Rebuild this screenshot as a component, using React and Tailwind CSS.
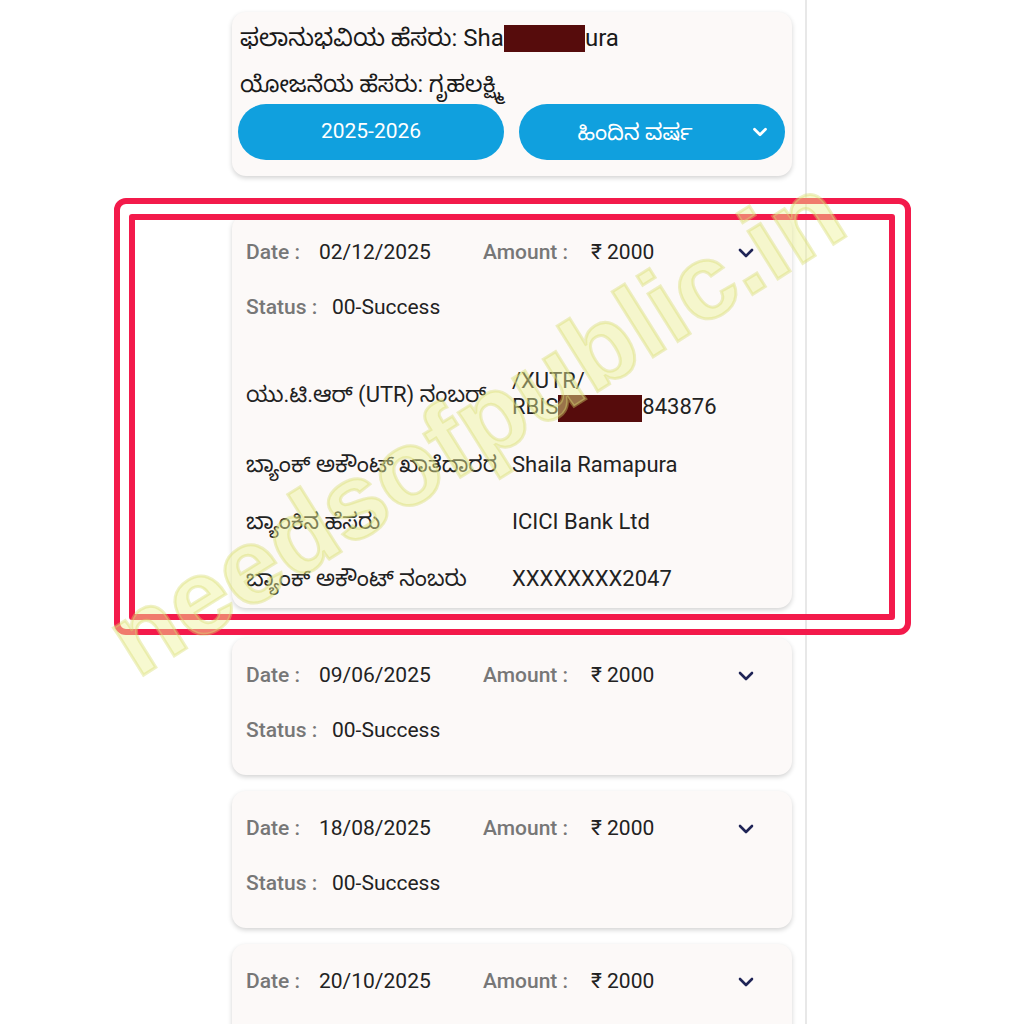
import { ChevronDown } from 'lucide-react'

const font = "font-['Roboto','Noto_Sans_Kannada','Noto_Sans',sans-serif]"

function Chevron({ className }) {
  return (
    <svg width="16" height="10" viewBox="0 0 16 10" className={className}>
      <polyline points="2,2 8,8 14,2" fill="none" stroke="currentColor" strokeWidth="2.6" strokeLinecap="round" strokeLinejoin="round" />
    </svg>
  )
}

function Redacted({ w }) {
  return <span className="inline-block h-[27px] bg-[#560c0c] align-middle" style={{ width: w }} />
}

function SummaryRows({ date }) {
  return (
    <>
      <div className="flex h-[28px] items-center text-[21px]">
        <span className="w-[73px] font-medium text-[#777]">Date :</span>
        <span className="w-[164px] text-[#222]">{date}</span>
        <span className="w-[108px] font-medium text-[#777]">Amount :</span>
        <span className="flex-1 text-[#222]">₹ 2000</span>
        <Chevron className="mr-[24px] text-[#1f2456]" />
      </div>
      <div className="mt-[27px] flex h-[28px] items-center text-[21px]">
        <span className="w-[86px] font-medium text-[#777]">Status :</span>
        <span className="text-[#222]">00-Success</span>
      </div>
    </>
  )
}

function DetailRow({ label, children, className }) {
  return (
    <div className={`grid grid-cols-[266px_1fr] items-center text-[22px] text-[#222] ${className}`}>
      <span className="whitespace-nowrap">{label}</span>
      <span>{children}</span>
    </div>
  )
}

export default function App() {
  const collapsed = ['09/06/2025', '18/08/2025', '20/10/2025']

  return (
    <div className={`relative h-[1024px] w-[1024px] overflow-hidden bg-white ${font}`}>
      <div className="ml-[220px] flex h-full w-[587px] flex-col border-r-2 border-[#e8e8e8] px-[12px] pt-[12px]">
        {/* beneficiary card */}
        <div className="flex h-[164px] w-[560px] shrink-0 flex-col rounded-[14px] bg-[#fcf9f8] px-[6px] pt-[12px] shadow-[0_2px_5px_rgba(0,0,0,0.18)]">
          <div className="flex h-[28px] items-center whitespace-nowrap px-[2px] text-[24px] text-[#1a1a1a]">
            ಫಲಾನುಭವಿಯ ಹೆಸರು: Sha<Redacted w={81} />ura
          </div>
          <div className="mt-[19px] flex h-[28px] items-center px-[2px] text-[23px] text-[#1a1a1a]">
            ಯೋಜನೆಯ ಹೆಸರು: ಗೃಹಲಕ್ಷ್ಮಿ
          </div>
          <div className="mt-[5px] flex gap-[15px]">
            <button className="flex h-[56px] w-[266px] items-center justify-center rounded-full bg-[#10a0de] text-[21px] text-white">
              2025-2026
            </button>
            <button className="relative flex h-[56px] w-[266px] items-center justify-center rounded-full bg-[#10a0de] pr-[34px] text-[22px] text-white">
              ಹಿಂದಿನ ವರ್ಷ
              <ChevronDown className="absolute right-[14px] h-[22px] w-[22px]" strokeWidth={3} />
            </button>
          </div>
        </div>

        {/* expanded payment card */}
        <div className="mt-[39px] w-[560px] shrink-0 rounded-[14px] bg-[#fcf9f8] px-[14px] pb-[18px] pt-[24px] shadow-[0_2px_5px_rgba(0,0,0,0.18)]">
          <SummaryRows date="02/12/2025" />
          <DetailRow label="ಯು.ಟಿ.ಆರ್ (UTR) ನಂಬರ್" className="mt-[46px]">
            <span className="block leading-[26px]">/XUTR/</span>
            <span className="block leading-[26px]">
              RBIS<Redacted w={84} />843876
            </span>
          </DetailRow>
          <DetailRow label="ಬ್ಯಾಂಕ್ ಅಕೌಂಟ್ ಖಾತೆದಾರರ" className="mt-[26px] h-[28px]">
            Shaila Ramapura
          </DetailRow>
          <DetailRow label="ಬ್ಯಾಂಕಿನ ಹೆಸರು" className="mt-[29px] h-[28px]">
            ICICI Bank Ltd
          </DetailRow>
          <DetailRow label="ಬ್ಯಾಂಕ್ ಅಕೌಂಟ್ ನಂಬರು" className="mt-[29px] h-[28px]">
            XXXXXXXX2047
          </DetailRow>
        </div>

        {collapsed.map((d, i) => (
          <div
            key={d}
            className={`${i === 0 ? 'mt-[30px]' : 'mt-[16px]'} h-[137px] w-[560px] shrink-0 rounded-[14px] bg-[#fcf9f8] px-[14px] pt-[24px] shadow-[0_2px_5px_rgba(0,0,0,0.18)]`}
          >
            <SummaryRows date={d} />
          </div>
        ))}
      </div>

      {/* red annotation frames */}
      <div className="pointer-events-none absolute left-[114px] top-[198px] h-[437px] w-[797px] rounded-[12px] border-[6px] border-[#f31a4b]" />
      <div className="pointer-events-none absolute left-[129px] top-[214px] h-[406px] w-[766px] rounded-[3px] border-[6px] border-[#f31a4b]" />

      {/* watermark */}
      <div className="pointer-events-none absolute left-[475px] top-[425px] -translate-x-1/2 -translate-y-1/2 rotate-[-32deg] whitespace-nowrap font-['Liberation_Sans',sans-serif] text-[106px] font-bold text-[rgba(238,242,150,0.45)] [-webkit-text-stroke:3px_rgba(214,220,110,0.4)]">
        needsofpublic.in
      </div>
    </div>
  )
}
